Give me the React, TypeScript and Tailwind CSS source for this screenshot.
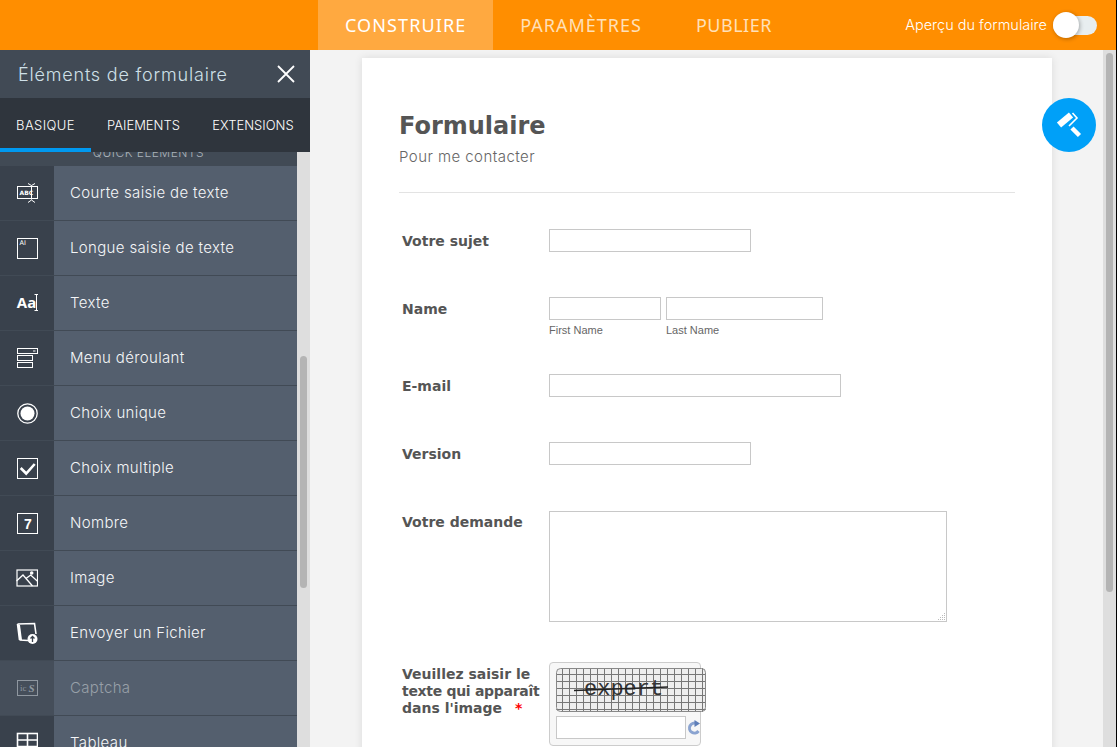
import React from "react";

const sb = "[font-family:Inter,sans-serif]";

function IconAbc() {
  return (
    <svg width="22" height="20" viewBox="0 0 22 20" fill="none" stroke="white">
      <rect x="1.500" y="3.500" width="20" height="12" />
      <path d="M12 .5l3.500 2 3.500-2M15.500 2.500v14M12 19.500l3.500-2.500 3.500 2.500" strokeWidth="1" />
      <text x="3.500" y="12" fontSize="6" fontWeight="700" fill="white" stroke="none" fontFamily="'DejaVu Sans',sans-serif">ABC</text>
    </svg>
  );
}
function IconLong() {
  return (
    <svg width="22" height="22" viewBox="0 0 22 22" fill="none" stroke="white">
      <rect x="1.500" y="1.500" width="20" height="20" />
      <text x="3.500" y="8" fontSize="6.500" fill="white" stroke="none" fontFamily="'DejaVu Sans',sans-serif">AI</text>
    </svg>
  );
}
function IconDrop() {
  return (
    <svg width="22" height="22" viewBox="0 0 22 22" fill="none" stroke="white">
      <rect x="1.500" y="1.500" width="20" height="5" />
      <rect x="1.500" y="8.500" width="15" height="5" />
      <rect x="1.500" y="15.500" width="15" height="5" />
      <rect x="17" y="3.500" width="2.500" height="1" fill="white" stroke="none" />
    </svg>
  );
}
function IconRadio() {
  return (
    <svg width="22" height="22" viewBox="0 0 22 22">
      <circle cx="11.500" cy="11.500" r="9.700" fill="none" stroke="white" strokeWidth="1.300" />
      <circle cx="11.500" cy="11.500" r="7" fill="white" />
    </svg>
  );
}
function IconCheck() {
  return (
    <svg width="22" height="22" viewBox="0 0 22 22" fill="none" stroke="white">
      <rect x="1.500" y="1.500" width="20" height="20" />
      <path d="M4.700 11l5.500 5.500 8.500-9.500" strokeWidth="2.600" />
    </svg>
  );
}
function IconNum() {
  return (
    <svg width="22" height="22" viewBox="0 0 22 22" fill="none" stroke="white">
      <rect x="1.500" y="1.500" width="20" height="20" />
      <text x="8" y="17" fontSize="14" fontWeight="700" fill="white" stroke="none" fontFamily="'Liberation Sans',sans-serif">7</text>
    </svg>
  );
}
function IconImage() {
  return (
    <svg width="22" height="18" viewBox="0 0 22 18" fill="none" stroke="white">
      <rect x="1" y="1" width="20.500" height="16" strokeWidth="1.200" />
      <path d="M.5 12l6.500-6 9.500 11M10.300 9.300L14.700 6l6.500 6" strokeWidth="1.300" />
      <circle cx="15.700" cy="4" r="1.800" fill="white" stroke="none" />
    </svg>
  );
}
function IconFile() {
  return (
    <svg width="22" height="22" viewBox="0 0 22 22">
      <path d="M1.500 2L18.500 1.500 20 12M3.500 18L1.500 2M3.500 18L12 18.500" fill="none" stroke="white" strokeWidth="1.600" />
      <path d="M1.500 2L3.500 18 6 18 4 3z" fill="white" />
      <circle cx="16.500" cy="17" r="5" fill="white" />
      <path d="M16.500 20v-5M14.500 16.500l2-2 2 2" fill="none" stroke="#39414c" strokeWidth="1.300" />
    </svg>
  );
}
function IconCaptcha() {
  return (
    <svg width="22" height="18" viewBox="0 0 22 18" fill="none" stroke="#8f97a0">
      <rect x="1.500" y="1.500" width="20" height="15" />
      <text x="4" y="12" fontSize="9" fill="#8f97a0" stroke="none" fontFamily="'Liberation Serif',serif">ic</text>
      <text x="12.500" y="13" fontSize="11" fontStyle="italic" fontWeight="700" fill="#8f97a0" stroke="none" fontFamily="'Liberation Serif',serif">S</text>
    </svg>
  );
}
function IconTable() {
  return (
    <svg width="22" height="22" viewBox="0 0 22 22" fill="none" stroke="white" strokeWidth="1.600">
      <rect x="1.500" y="1.500" width="20" height="20" />
      <path d="M1.500 8h20M1.500 14.500h20M11.500 1.500v20" />
    </svg>
  );
}

const items: { label: string; icon: React.ReactNode; disabled?: boolean }[] = [
  { label: "Courte saisie de texte", icon: <IconAbc /> },
  { label: "Longue saisie de texte", icon: <IconLong /> },
  {
    label: "Texte",
    icon: (
      <span className="flex items-center pb-[2px] pl-[2px] text-white">
        <span className="text-[15px] font-bold leading-none [font-family:'Open_Sans',sans-serif]">Aa</span>
        <svg width="5" height="17" viewBox="0 0 5 17" fill="none" stroke="white" className="-ml-[2px]">
          <path d="M.5 .5h3.500M2.500 .5v16M.5 16.500h3.500" />
        </svg>
      </span>
    ),
  },
  { label: "Menu déroulant", icon: <IconDrop /> },
  { label: "Choix unique", icon: <IconRadio /> },
  { label: "Choix multiple", icon: <IconCheck /> },
  { label: "Nombre", icon: <IconNum /> },
  { label: "Image", icon: <IconImage /> },
  { label: "Envoyer un Fichier", icon: <IconFile /> },
  { label: "Captcha", icon: <IconCaptcha />, disabled: true },
  { label: "Tableau", icon: <IconTable /> },
];

function Field({ label, children, className, labelPad = "pt-[4px]" }: { label: React.ReactNode; children: React.ReactNode; className: string; labelPad?: string }) {
  return (
    <div className={`flex ${className}`}>
      <div className={`w-[147px] shrink-0 ${labelPad} text-[14px] font-bold leading-[17px] text-[#555] [font-family:'DejaVu_Sans',sans-serif]`}>
        {label}
      </div>
      <div>{children}</div>
    </div>
  );
}

const box = "block h-[23px] border border-[#c8c8c8] bg-white";

export default function App() {
  return (
    <div className="flex h-[747px] w-[1119px] overflow-hidden bg-white">
      <div className="flex h-full w-[1116px] shrink-0 flex-col">
        <header className="flex h-[50px] shrink-0 items-stretch bg-[#ff8e00] text-white [font-family:'Noto_Sans',sans-serif]">
          <nav className="ml-[318px] flex text-[18px] tracking-[1.1px]">
            <div className="flex items-center bg-[#ffa940] px-[27px]">CONSTRUIRE</div>
            <div className="flex items-center px-[27px] tracking-[1px] text-[#ffe0b8]">PARAMÈTRES</div>
            <div className="flex items-center px-[27px] tracking-[0.5px] text-[#ffe0b8]">PUBLIER</div>
          </nav>
          <div className="ml-auto flex items-center pr-[19px]">
            <span className={`mr-[6px] text-[14.500px] font-light ${sb}`}>Aperçu du formulaire</span>
            <div className="relative h-[19px] w-[44px] rounded-full bg-[#e8eef0]">
              <div className="absolute -top-[4px] left-0 h-[26px] w-[26px] rounded-full bg-white shadow-[1px_1px_4px_rgba(0,0,0,0.3)]" />
            </div>
          </div>
        </header>

        <div className="flex min-h-0 flex-1">
          <aside className="flex w-[310px] shrink-0 flex-col overflow-hidden bg-[#dedede]">
            <div className="flex h-[48px] shrink-0 items-center justify-between bg-[#414a55] pl-[18px] pr-[15px]">
              <span className={`text-[18px] font-light tracking-[0.8px] text-[#cfe0e8] ${sb}`}>Éléments de formulaire</span>
              <svg width="18" height="18" viewBox="0 0 18 18" stroke="white" strokeWidth="1.800">
                <path d="M1 1l16 16M17 1L1 17" />
              </svg>
            </div>
            <div className={`flex h-[54px] shrink-0 bg-[#2f353d] text-[13px] font-light text-white ${sb}`}>
              <div className="flex w-[91px] items-center justify-center border-b-4 border-[#0099f0] pt-[6px] tracking-[0.4px]">BASIQUE</div>
              <div className="flex w-[105px] items-center justify-center pt-[2px]">PAIEMENTS</div>
              <div className="flex flex-1 items-center justify-center pt-[2px]">EXTENSIONS</div>
            </div>
            <div className="flex min-h-0 flex-1">
              <div className="w-[297px] shrink-0">
                <div className="h-[13px] overflow-hidden bg-[#414a55]">
                  <div className={`-mt-[6px] text-center text-[12px] font-light leading-[14px] tracking-[0.5px] text-[#aab2ba] ${sb}`}>QUICK ELEMENTS</div>
                </div>
                {items.map((it) => (
                  <div key={it.label} className="flex h-[55px] border-t border-[#414a55]">
                    <div className={`flex w-[54px] shrink-0 items-center justify-center ${it.disabled ? "bg-[#454e5a]" : "bg-[#39414c]"}`}>
                      {it.icon}
                    </div>
                    <div className={`flex flex-1 items-center bg-[#545f6e] pl-[16px] text-[15px] font-light tracking-[0.35px] ${it.disabled ? "text-[#98a0a8]" : "text-[#f4f6f8]"} ${sb}`}>
                      {it.label}
                    </div>
                  </div>
                ))}
              </div>
              <div className="flex-1 pl-[3px] pt-[204px]">
                <div className="h-[232px] w-[7px] rounded-full bg-[#b4b4b4]" />
              </div>
            </div>
          </aside>

          <main className="relative flex min-w-0 flex-1 flex-col items-start bg-[#f3f3f3] pl-[52px] pt-[8px]">
            <div className="h-[800px] w-[690px] shrink-0 bg-white px-[37px] pt-[53px] shadow-[0_0_8px_rgba(0,0,0,0.1)]">
              <div className="border-b border-[#e3e3e3] pb-[26px]">
                <h1 className="text-[24px] font-bold leading-[30px] text-[#555] [font-family:'DejaVu_Sans',sans-serif]">Formulaire</h1>
                <p className="mt-[7px] text-[15px] font-light leading-[18px] tracking-[0.45px] text-[#666] [font-family:'Inter',sans-serif]">Pour me contacter</p>
              </div>
              <div className="pl-[3px] pt-[36px]">
                <Field label="Votre sujet" className="h-[68px]">
                  <div className={`${box} w-[202px]`} />
                </Field>
                <Field label="Name" className="h-[77px]">
                  <div className="flex gap-[5px]">
                    <div>
                      <div className={`${box} w-[112px]`} />
                      <div className="mt-[4px] text-[11px] leading-[13px] text-[#666] [font-family:'Liberation_Sans',sans-serif]">First Name</div>
                    </div>
                    <div>
                      <div className={`${box} w-[157px]`} />
                      <div className="mt-[4px] text-[11px] leading-[13px] text-[#666] [font-family:'Liberation_Sans',sans-serif]">Last Name</div>
                    </div>
                  </div>
                </Field>
                <Field label="E-mail" className="h-[68px]">
                  <div className={`${box} w-[292px]`} />
                </Field>
                <Field label="Version" className="h-[69px]">
                  <div className={`${box} w-[202px]`} />
                </Field>
                <Field label="Votre demande" className="h-[151px]" labelPad="pt-[3px]">
                  <div className="relative h-[111px] w-[398px] border border-[#c8c8c8]">
                    <svg className="absolute bottom-0 right-0" width="10" height="10" viewBox="0 0 10 10" fill="#bbb">
                      <rect x="8" y="2" width="1" height="1" />
                      <rect x="6" y="4" width="1" height="1" />
                      <rect x="8" y="4" width="1" height="1" />
                      <rect x="4" y="6" width="1" height="1" />
                      <rect x="6" y="6" width="1" height="1" />
                      <rect x="8" y="6" width="1" height="1" />
                      <rect x="2" y="8" width="1" height="1" />
                      <rect x="4" y="8" width="1" height="1" />
                      <rect x="6" y="8" width="1" height="1" />
                      <rect x="8" y="8" width="1" height="1" />
                    </svg>
                  </div>
                </Field>
                <Field
                  className=""
                  label={
                    <>
                      Veuillez saisir le
                      <br />
                      <span className="tracking-[-0.3px]">texte qui apparaît</span>
                      <br />
                      dans l'image <span className="ml-[8px] text-[#f00]">*</span>
                    </>
                  }
                >
                  <div className="h-[84px] w-[152px] rounded-[4px] border border-[#ccc] bg-[#f7f7f7] px-[6px] pt-[5px]">
                    <svg width="150" height="44" viewBox="0 0 150 44" className="block max-w-none rounded-[4px]">
                      <defs>
                        <pattern id="g" width="7" height="7" patternUnits="userSpaceOnUse">
                          <path d="M6.500 0v7M0 6.500h7" stroke="#777" strokeWidth="1" fill="none" />
                        </pattern>
                      </defs>
                      <rect width="150" height="44" fill="#eeeeee" />
                      <rect width="150" height="44" fill="url(#g)" />
                      <rect x=".5" y=".5" width="149" height="43" rx="4" fill="none" stroke="#888" />
                      <text x="28" y="27" fontSize="22" fill="#333" fontFamily="'Liberation Mono',monospace">expert</text>
                      <path d="M18 22.500L112 19" stroke="#222" strokeWidth="1.400" />
                    </svg>
                    <div className="mt-[4px] flex w-[150px] items-center gap-[1px]">
                      <div className="h-[23px] w-[130px] shrink-0 border border-[#c8c8c8] bg-white" />
                      <svg width="14" height="17" viewBox="0 0 14 17" className="shrink-0">
                        <path d="M11.500 12a5 5 0 1 1-2-7.500" fill="none" stroke="#8aa3d0" strokeWidth="3" />
                        <path d="M7.500 1l5.500 3.500-5.500 3.500z" fill="#5f7fb8" />
                      </svg>
                    </div>
                  </div>
                </Field>
              </div>
            </div>
            <button className="absolute right-[7px] top-[48px] flex h-[54px] w-[54px] items-center justify-center rounded-full bg-[#00a0f8]">
              <svg width="26" height="26" viewBox="0 0 26 26" fill="none" stroke="white">
                <path d="M3 13L15 3" strokeWidth="6.500" />
                <path d="M16.500 1l4.500 5-8 8" strokeWidth="1.600" />
                <path d="M16 16l7.500 7.500" strokeWidth="4.500" />
              </svg>
            </button>
          </main>

          <div className="w-[13px] shrink-0 bg-[#dedede] pl-[3px] pt-[3px]">
            <div className="h-[539px] w-[7px] rounded-full bg-[#b4b4b4]" />
          </div>
        </div>
      </div>
      <div className="h-full w-[1px] shrink-0 bg-black" />
    </div>
  );
}
